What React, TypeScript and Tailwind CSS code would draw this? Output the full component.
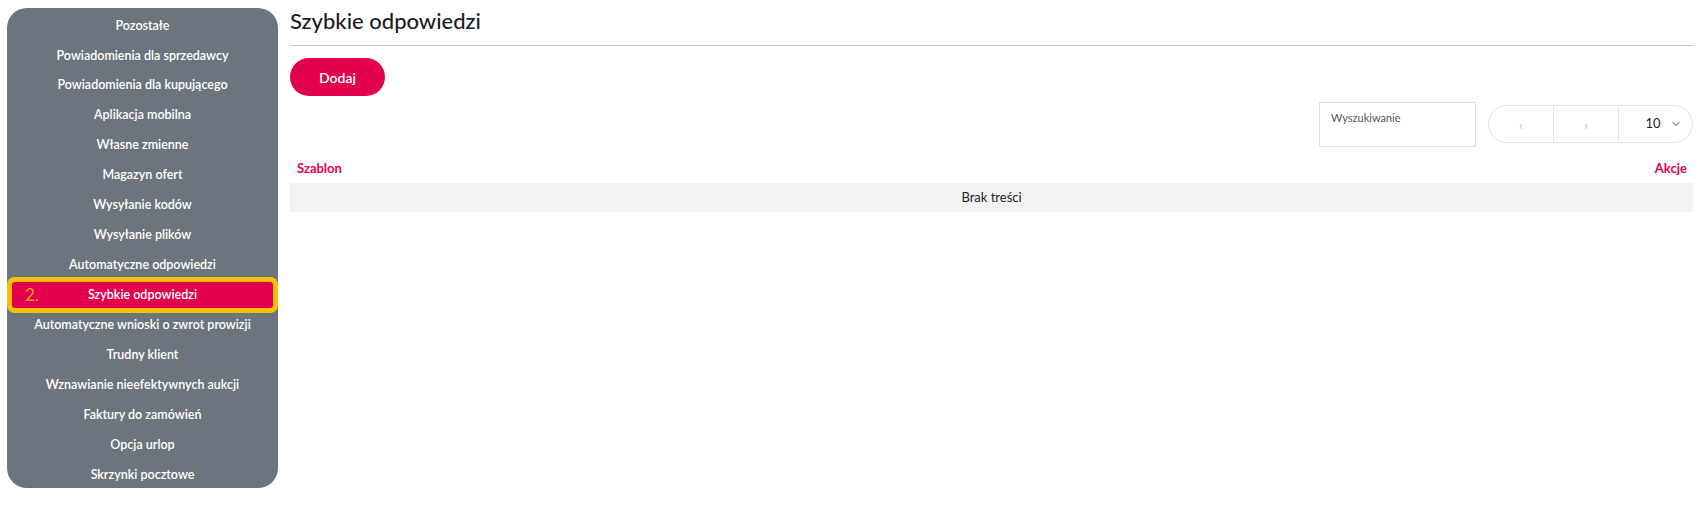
import { ChevronDown } from "lucide-react";

const menu = [
  "Pozostałe",
  "Powiadomienia dla sprzedawcy",
  "Powiadomienia dla kupującego",
  "Aplikacja mobilna",
  "Własne zmienne",
  "Magazyn ofert",
  "Wysyłanie kodów",
  "Wysyłanie plików",
  "Automatyczne odpowiedzi",
  "Szybkie odpowiedzi",
  "Automatyczne wnioski o zwrot prowizji",
  "Trudny klient",
  "Wznawianie nieefektywnych aukcji",
  "Faktury do zamówień",
  "Opcja urlop",
  "Skrzynki pocztowe",
];

const ACTIVE = "Szybkie odpowiedzi";

function Sidebar() {
  return (
    <aside className="ml-[7px] mt-[8px] flex h-[480px] w-[271px] shrink-0 flex-col gap-[4px] rounded-[20px] bg-[#6c757d] px-[5px] pt-[5px]">
      {menu.map((label) =>
        label === ACTIVE ? (
          <div
            key={label}
            className="relative z-10 flex h-[26px] items-center justify-center rounded-[3px] bg-[#e2004f] text-[12.5px] font-semibold text-white shadow-[0_0_0_5px_#f8c108]"
          >
            {/* annotation marker from the screenshot */}
            <span className="absolute left-[13px] top-1/2 -translate-y-1/2 text-[17px] font-normal text-[#f7a21b]">2.</span>
            {label}
          </div>
        ) : (
          <div key={label} className="flex h-[26px] items-center justify-center text-[12.5px] font-semibold text-white">
            {label}
          </div>
        )
      )}
    </aside>
  );
}

function Toolbar() {
  return (
    <div className="mt-[6px] flex items-start justify-end">
      <div className="h-[45px] w-[157px] border border-[#dedede] px-[11px] pt-[7px] text-[11px] text-[#555]">
        Wyszukiwanie
      </div>
      <div className="ml-[12px] mt-[3px] flex h-[38px] w-[205px] overflow-hidden rounded-full border border-[#e3e3e3]">
        <div className="flex w-[65px] items-center justify-center border-r border-[#e3e3e3] pt-[3px] text-[13px] text-[#bbb]">‹</div>
        <div className="flex w-[65px] items-center justify-center border-r border-[#e3e3e3] pt-[3px] text-[13px] text-[#bbb]">›</div>
        <div className="flex flex-1 items-center justify-center gap-[9px] pl-[16px] text-[13px] text-[#222]">
          10
          <ChevronDown size={12} strokeWidth={2} className="text-[#444]" />
        </div>
      </div>
    </div>
  );
}

export default function App() {
  return (
    <div className="flex h-[517px] w-[1704px] bg-white font-['Lato',sans-serif]">
      <Sidebar />

      <main className="ml-[12px] mr-[11px] flex flex-1 flex-col">
        <div className="flex h-[46px] items-start border-b border-[#c8c8c8] pt-[7px]">
          <h1 className="text-[22px] font-medium leading-[28px] text-[#1c1c24]">Szybkie odpowiedzi</h1>
        </div>

        <button className="mt-[12px] h-[38px] w-[95px] rounded-full bg-[#e2004f] text-[14px] font-semibold text-white">
          Dodaj
        </button>

        <Toolbar />

        {/* Table header */}
        <div className="mt-[8px] flex h-[28px] items-center justify-between pl-[7px] pr-[6px] text-[13px] font-bold text-[#e2004f]">
          <span>Szablon</span>
          <span>Akcje</span>
        </div>
        <div className="flex h-[29px] items-center justify-center bg-[#f2f2f2] text-[13px] text-[#222]">Brak treści</div>
      </main>
    </div>
  );
}
